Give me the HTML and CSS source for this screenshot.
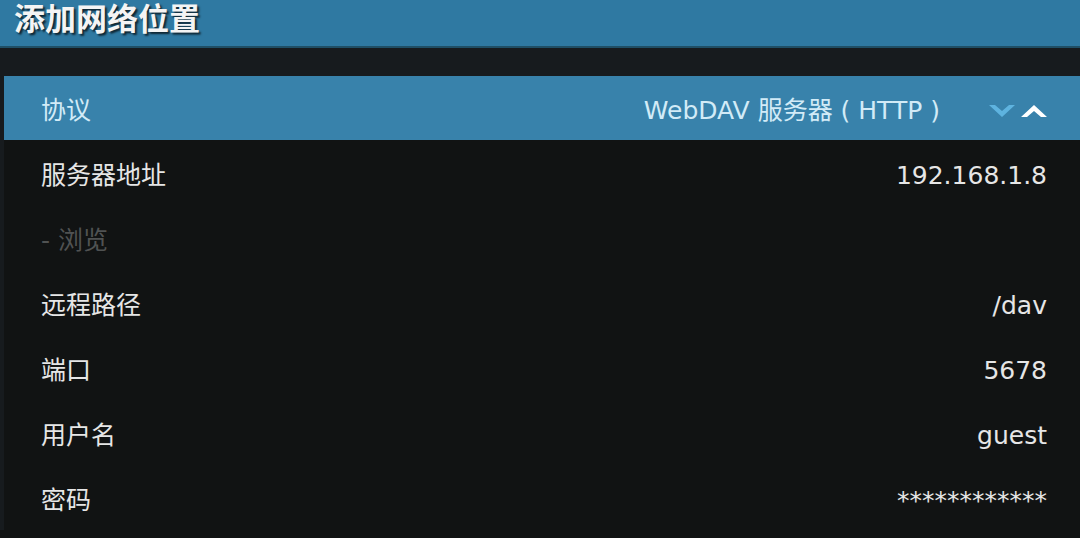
FILE: index.html
```html
<!DOCTYPE html>
<html lang="zh-CN">
<head>
  <meta charset="UTF-8">
  <title>添加网络位置</title>
  <link rel="stylesheet" href="styles.css">
</head>
<body>
  <div class="header">
    <h1 class="title">添加网络位置</h1>
  </div>
  <div class="gap"></div>
  <div class="panel">
    <ul class="settings">
      <li class="row selected">
        <span class="label">协议</span>
        <span class="value">WebDAV 服务器 ( HTTP )</span>
        <span class="spin">
          <svg class="arrow" width="28" height="14" viewBox="0 0 28 14"><path d="M1 1 L14 13 L27 1 L21 1 L14 7 L7 1 Z" fill="#5eb3df"/></svg>
          <svg class="arrow" width="28" height="14" viewBox="0 0 28 14"><path d="M1 13 L14 1 L27 13 L21 13 L14 7 L7 13 Z" fill="#ffffff"/></svg>
        </span>
      </li>
      <li class="row">
        <span class="label">服务器地址</span>
        <span class="value">192.168.1.8</span>
      </li>
      <li class="row disabled">
        <span class="label">- 浏览</span>
      </li>
      <li class="row">
        <span class="label">远程路径</span>
        <span class="value">/dav</span>
      </li>
      <li class="row">
        <span class="label">端口</span>
        <span class="value">5678</span>
      </li>
      <li class="row">
        <span class="label">用户名</span>
        <span class="value">guest</span>
      </li>
      <li class="row">
        <span class="label">密码</span>
        <span class="value">************</span>
      </li>
    </ul>
  </div>
</body>
</html>
```

FILE: styles.css
```css
body {
  margin: 0;
  width: 1080px;
  height: 538px;
  overflow: hidden;
  background-color: #111313;
  font-family: "DejaVu Sans", "Noto Sans CJK SC", sans-serif;
  color: #e6e6e6;
}

.header {
  height: 46px;
  background-color: #2f79a2;
  border-bottom: 2px solid #1f4f66;
}

.title {
  margin: 0;
  padding-left: 14px;
  font-family: "Noto Sans CJK SC", sans-serif;
  font-size: 31px;
  font-weight: bold;
  line-height: 34px;
  color: #f4f4f4;
  text-shadow: 2px 2px 2px rgba(0, 0, 0, 0.7);
}

.gap {
  height: 28px;
  background-color: #171b1e;
}

.panel {
  border-left: 4px solid #171b1e;
}

.settings {
  list-style: none;
  margin: 0;
  padding: 0;
}

.row {
  display: flex;
  align-items: baseline;
  height: 59px;
  line-height: 59px;
  padding: 6px 33px 0 37px;
  font-size: 25px;
}

.row .value {
  margin-left: auto;
}

.row.selected {
  height: 58px;
  line-height: 58px;
  background-color: #3882ab;
  color: #d2ebf7;
  padding-right: 32px;
}

.row.disabled {
  color: #505252;
}

.spin {
  display: flex;
  align-items: center;
  align-self: center;
  gap: 4px;
  margin-left: 48px;
}

.arrow {
  display: block;
}
```
